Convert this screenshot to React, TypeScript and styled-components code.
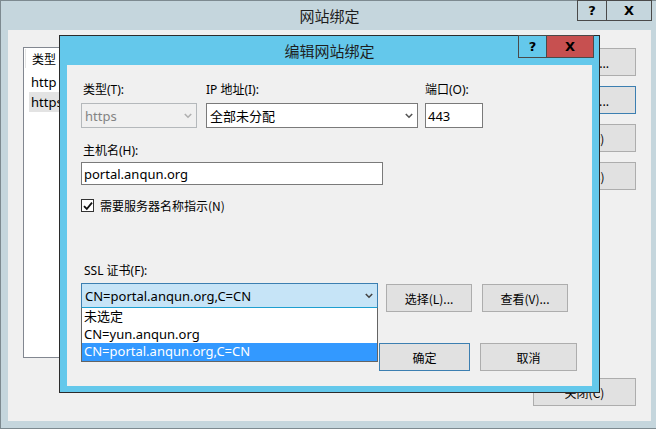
import styled, { createGlobalStyle } from 'styled-components'

const GlobalStyle = createGlobalStyle`
    html, body {
        margin: 0;
        padding: 0;
    }
    body {
        background: #c5d6dd;
        font-family: "Noto Sans", "Noto Sans CJK SC", sans-serif;
        font-size: 12px;
        color: #000;
    }
    * {
        box-sizing: border-box;
    }
`

const Desktop = styled.div`
    position: relative;
    width: 656px;
    height: 429px;
    overflow: hidden;
    background: #c5d6dd;
`

/* windows sit on the desktop at their own coordinates */
const Window = styled.div<{ $left: number; $top: number; $width: number; $height: number; $frame: string; $edge: string }>`
    position: absolute;
    left: ${(p) => p.$left}px;
    top: ${(p) => p.$top}px;
    width: ${(p) => p.$width}px;
    height: ${(p) => p.$height}px;
    background: ${(p) => p.$frame};
    border: 1px solid ${(p) => p.$edge};
    display: flex;
    flex-direction: column;
`

const TitleBar = styled.div`
    position: relative;
    height: 29px;
    flex: none;
    display: flex;
    align-items: center;
    justify-content: center;
    font-family: "Noto Sans CJK SC", sans-serif;
    font-size: 15px;
    color: #1e1e1e;
`

const Caption = styled.div<{ $right: number; $top: number }>`
    position: absolute;
    right: ${(p) => p.$right}px;
    top: ${(p) => p.$top}px;
    display: flex;
`

const CaptionButton = styled.div<{ $w: number; $h: number; $bg?: string }>`
    width: ${(p) => p.$w}px;
    height: ${(p) => p.$h}px;
    background: ${(p) => p.$bg || 'transparent'};
    border: 1px solid #4a4a4a;
    margin-left: -1px;
    display: flex;
    align-items: center;
    justify-content: center;
    font-family: "DejaVu Sans", sans-serif;
    font-weight: bold;
    font-size: 13px;
    color: #000;
`

const Body = styled.div<{ $mx: number; $mb: number }>`
    flex: 1;
    margin: 0 ${(p) => p.$mx}px ${(p) => p.$mb}px;
    background: #f0f0f0;
`

/* ---------- background window: 网站绑定 ---------- */

const BackBody = styled(Body)`
    display: flex;
    flex-direction: column;
    padding: 17px 15px 15px 15px;
`

const BackTop = styled.div`
    display: flex;
    gap: 12px;
    height: 311px;
`

const ListBox = styled.div`
    flex: 1;
    background: #fff;
    border: 1px solid #828790;
    padding: 1px;
`

const ListHeader = styled.div`
    display: flex;
    height: 19px;
`

const HeaderCell = styled.div`
    width: 110px;
    padding-left: 6px;
    border-left: 1px solid #e5e5e5;
    border-right: 1px solid #e5e5e5;
    line-height: 19px;
    font-family: "Noto Sans CJK SC", sans-serif;
`

const ListItem = styled.div<{ $selected?: boolean }>`
    height: 20px;
    line-height: 20px;
    margin-left: 4px;
    padding-left: 2px;
    width: 120px;
    background: ${(p) => (p.$selected ? '#e3e3e3' : 'transparent')};
    font-size: 13px;
`

const ListItems = styled.div`
    margin-top: 4px;
`

const ButtonColumn = styled.div`
    width: 103px;
    display: flex;
    flex-direction: column;
    gap: 10px;
    padding-top: 1px;
`

const Button = styled.div<{ $w?: number; $primary?: boolean }>`
    width: ${(p) => (p.$w ? `${p.$w}px` : '100%')};
    height: 28px;
    flex: none;
    background: #e1e1e1;
    border: 1px solid ${(p) => (p.$primary ? '#3c7fb1' : '#adadad')};
    display: flex;
    align-items: center;
    justify-content: center;
    font-family: "Noto Sans CJK SC", sans-serif;
    font-size: 12px;
    color: #000;
`

const BackFooter = styled.div`
    margin-top: 20px;
    display: flex;
    justify-content: flex-end;
`

/* ---------- foreground dialog: 编辑网站绑定 ---------- */

const DialogBody = styled(Body)`
    display: flex;
    flex-direction: column;
    padding: 17px 15px 0 14px;
`

const Row = styled.div<{ $gap?: number; $mt?: number }>`
    display: flex;
    align-items: flex-start;
    gap: ${(p) => p.$gap || 0}px;
    margin-top: ${(p) => p.$mt || 0}px;
`

const Field = styled.div<{ $w: number; $ml?: number }>`
    width: ${(p) => p.$w}px;
    margin-left: ${(p) => p.$ml || 0}px;
    display: flex;
    flex-direction: column;
`

const Label = styled.div<{ $mb?: number; $pl?: number }>`
    height: 16px;
    line-height: 16px;
    margin-bottom: ${(p) => (p.$mb === undefined ? 5 : p.$mb)}px;
    padding-left: ${(p) => p.$pl || 0}px;
    font-family: "Noto Sans", "Noto Sans CJK SC", sans-serif;
    font-size: 12px;
    white-space: nowrap;
`

const Select = styled.div<{ $disabled?: boolean; $focused?: boolean; $h?: number }>`
    position: relative;
    height: ${(p) => p.$h || 25}px;
    display: flex;
    align-items: center;
    justify-content: space-between;
    padding: 0 4px 0 3px;
    background: ${(p) => (p.$disabled ? '#f0f0f0' : p.$focused ? '#c6e4f7' : '#fff')};
    border: 1px solid ${(p) => (p.$disabled ? '#b4b8bb' : p.$focused ? '#3c7fb1' : '#7a7a7a')};
    color: ${(p) => (p.$disabled ? '#838383' : '#000')};
    font-size: 13px;
    white-space: nowrap;
`

const TextBox = styled.div<{ $w: number; $h: number }>`
    width: ${(p) => p.$w}px;
    height: ${(p) => p.$h}px;
    display: flex;
    align-items: center;
    padding-left: 2px;
    background: #fff;
    border: 1px solid #7a7a7a;
    font-size: 13px;
`

const CheckRow = styled.label`
    display: flex;
    align-items: center;
    gap: 6px;
    height: 13px;
    font-family: "Noto Sans CJK SC", sans-serif;
    font-size: 12px;
`

const CheckBox = styled.span`
    width: 13px;
    height: 13px;
    background: #fff;
    border: 1px solid #333;
    display: flex;
    align-items: center;
    justify-content: center;
`

const DropList = styled.div`
    position: absolute;
    left: -1px;
    right: -1px;
    top: 100%;
    background: #fff;
    border: 1px solid #646464;
    border-top-color: #1e9fd0;
    z-index: 2;
`

const DropItem = styled.div<{ $selected?: boolean }>`
    height: 17.5px;
    line-height: 17px;
    padding-left: 2px;
    background: ${(p) => (p.$selected ? '#3399ff' : '#fff')};
    color: ${(p) => (p.$selected ? '#fff' : '#000')};
    font-size: 13px;
`

const SideButton = styled(Button)<{ $ml?: number }>`
    margin-top: 1px;
    margin-left: ${(p) => p.$ml || 0}px;
`

const Footer = styled.div`
    margin-top: 31px;
    display: flex;
    justify-content: flex-end;
    gap: 10px;
`

const Chevron = ({ color }: { color: string }) => (
    <svg width="8" height="6" viewBox="0 0 8 6">
        <path d="M0.8 1 L4 4.2 L7.2 1" fill="none" stroke={color} strokeWidth="1.6" />
    </svg>
)

const Check = () => (
    <svg width="10" height="10" viewBox="0 0 10 10">
        <path d="M1 5.2 L3.8 8 L9 1.6" fill="none" stroke="#111" strokeWidth="1.8" />
    </svg>
)

const BackWindow = () => (
    <Window $left={0} $top={0} $width={659} $height={429} $frame="#c5d6dd" $edge="#7d8a90">
        <TitleBar>
            网站绑定
            <Caption $right={6} $top={-1}>
                <CaptionButton $w={30} $h={21}>?</CaptionButton>
                <CaptionButton $w={46} $h={21}>X</CaptionButton>
            </Caption>
        </TitleBar>
        <BackBody $mx={7} $mb={8}>
            <BackTop>
                <ListBox>
                    <ListHeader>
                        <HeaderCell>类型</HeaderCell>
                    </ListHeader>
                    <ListItems>
                        <ListItem>http</ListItem>
                        <ListItem $selected>https</ListItem>
                    </ListItems>
                </ListBox>
                <ButtonColumn>
                    <Button>添加(A)...</Button>
                    <Button $primary>编辑(E)...</Button>
                    <Button>删除(R)</Button>
                    <Button>浏览(B)</Button>
                </ButtonColumn>
            </BackTop>
            <BackFooter>
                <Button $w={103}>关闭(C)</Button>
            </BackFooter>
        </BackBody>
    </Window>
)

const EditDialog = () => (
    <Window $left={59} $top={35} $width={541} $height={358} $frame="#64c8eb" $edge="#2b2b2b">
        <TitleBar>
            编辑网站绑定
            <Caption $right={5} $top={-1}>
                <CaptionButton $w={29} $h={23}>?</CaptionButton>
                <CaptionButton $w={48} $h={23} $bg="#c75050">X</CaptionButton>
            </Caption>
        </TitleBar>
        <DialogBody $mx={7} $mb={6}>
            <Row>
                <Field $w={116}>
                    <Label $pl={2}>类型(T):</Label>
                    <Select $disabled>
                        https
                        <Chevron color="#b0b0b0" />
                    </Select>
                </Field>
                <Field $w={212} $ml={9}>
                    <Label>IP 地址(I):</Label>
                    <Select>
                        全部未分配
                        <Chevron color="#555" />
                    </Select>
                </Field>
                <Field $w={58} $ml={7}>
                    <Label>端口(O):</Label>
                    <TextBox $w={58} $h={25}>443</TextBox>
                </Field>
            </Row>
            <Row $mt={15}>
                <Field $w={302}>
                    <Label $pl={2} $mb={3}>主机名(H):</Label>
                    <TextBox $w={302} $h={23}>portal.anqun.org</TextBox>
                </Field>
            </Row>
            <Row $mt={14}>
                <CheckRow>
                    <CheckBox>
                        <Check />
                    </CheckBox>
                    需要服务器名称指示(N)
                </CheckRow>
            </Row>
            <Row $mt={51}>
                <Label $pl={3} $mb={4}>SSL 证书(F):</Label>
            </Row>
            <Row $gap={10}>
                <Field $w={297}>
                    <Select $focused>
                        CN=portal.anqun.org,C=CN
                        <Chevron color="#444" />
                        <DropList>
                            <DropItem>未选定</DropItem>
                            <DropItem>CN=yun.anqun.org</DropItem>
                            <DropItem $selected>CN=portal.anqun.org,C=CN</DropItem>
                        </DropList>
                    </Select>
                </Field>
                <SideButton $w={86} $ml={-2}>选择(L)...</SideButton>
                <SideButton $w={86}>查看(V)...</SideButton>
            </Row>
            <Footer>
                <Button $w={91} $primary>确定</Button>
                <Button $w={97}>取消</Button>
            </Footer>
        </DialogBody>
    </Window>
)

const App = () => {
    return (
        <>
            <GlobalStyle />
            <Desktop>
                <BackWindow />
                <EditDialog />
            </Desktop>
        </>
    )
}

export default App
